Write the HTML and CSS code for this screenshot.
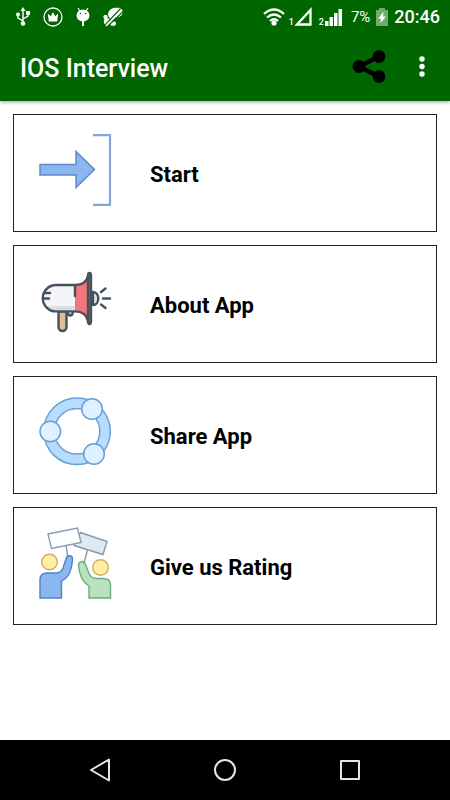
FILE: index.html
```html
<!DOCTYPE html>
<html lang="en">
<head>
<meta charset="utf-8">
<meta name="viewport" content="width=device-width, initial-scale=1">
<title>IOS Interview</title>
<link rel="stylesheet" href="styles.css">
</head>
<body>
<header class="top">
  <div class="status">
    <div class="status-group notices">
      <svg width="20" height="20" viewBox="0 0 20 20" fill="none" stroke="#fff" stroke-width="1.4"><path d="M10 3v14M10 14L5 11V8M10 12l5-3V6"/><path d="M10 0l2.500 4h-5zM13 4h4v4h-4z" fill="#fff" stroke="none"/><circle cx="5" cy="7.500" r="2" fill="#fff" stroke="none"/><circle cx="10" cy="16.500" r="2.300" fill="#fff" stroke="none"/></svg>
      <svg width="20" height="20" viewBox="0 0 20 20"><circle cx="10" cy="10" r="9" fill="none" stroke="#fff" stroke-width="1.300"/><path d="M4.800 6.500l3 2.800L10 5l2.200 4.300 3-2.800-1 8H5.800z" fill="#fff"/></svg>
      <svg width="20" height="20" viewBox="0 0 20 20"><path d="M5 1l2 3M15 1l-2 3" stroke="#fff" stroke-width="1.200"/><ellipse cx="10" cy="8.500" rx="6.500" ry="6" fill="#fff"/><path d="M9 14h2v5H9z" fill="#fff"/><circle cx="7.500" cy="6.500" r=".8" fill="#060"/><circle cx="12.500" cy="6.500" r=".8" fill="#060"/></svg>
      <svg width="20" height="20" viewBox="0 0 20 20"><path d="M5 8C5 2 11 0 14 1c3-1 6.500 2 5.500 5-1 4-5 5-8 4.500L8 14z" fill="#fff"/><circle cx="2.500" cy="10" r="2.200" fill="#fff"/><circle cx="4" cy="14.500" r="3.200" fill="#fff"/><ellipse cx="10" cy="16.500" rx="3" ry="2.300" fill="#fff"/><path d="M2.500 17.500L17.500 1.500M4.500 19.500L20 4.500" stroke="#060" stroke-width="1.100"/><path d="M3 19L19 3" stroke="#fff" stroke-width="1.400"/></svg>
    </div>
    <div class="status-group">
      <svg width="22" height="18" viewBox="0 0 22 18" fill="none" stroke="#fff" stroke-width="2.300"><path d="M1 6Q11-3 21 6M4 9.500q7-6 14 0M7 13q4-3.500 8 0"/><circle cx="11" cy="15" r="2.600" fill="#fff" stroke="none"/></svg>
      <span class="sim">1</span>
      <svg width="18" height="18" viewBox="0 0 18 18"><path d="M2 16.500L15.500 2v14.500z" fill="none" stroke="#fff" stroke-width="2.300"/></svg>
      <span class="sim sim-second">2</span>
      <svg width="18" height="18" viewBox="0 0 18 18" fill="#fff"><path d="M0 13h3.500v5H0zM4.500 9H8v9H4.500zM9 5h3.500v13H9zM13.500 1H17v17h-3.500z"/></svg>
      <span class="percent">7%</span>
      <svg class="battery" width="12" height="18" viewBox="0 0 12 18"><path d="M3 0h6v2h3v16H0V2h3z" fill="#72aa72"/><path d="M7.500 4L2 10.500h3L4.500 15 10 8.500H7z" fill="#fff"/></svg>
      <time class="clock">20:46</time>
    </div>
  </div>
  <div class="toolbar">
    <h1>IOS Interview</h1>
    <button class="tool" aria-label="Share"><svg width="34" height="34" viewBox="0 0 34 34"><path d="M27 6.500L7 16.500l20 10" fill="none" stroke="#000" stroke-width="4.500"/><circle cx="27" cy="6.500" r="6.400"/><circle cx="7" cy="16.500" r="6.400"/><circle cx="27" cy="26.500" r="6.400"/></svg></button>
    <button class="tool" aria-label="More options"><svg width="6" height="22" viewBox="0 0 6 22" fill="#fff"><circle cx="3" cy="3" r="2.700"/><circle cx="3" cy="10.500" r="2.700"/><circle cx="3" cy="18" r="2.700"/></svg></button>
  </div>
</header>
<main class="menu">
  <button class="card">
    <svg class="picture" viewBox="0 0 72 72"><path d="M1 30.500h36V17.500L55.500 35.500 37 53.500V41H1z" fill="#8bb7f0" stroke="#5d8ac8" stroke-width="1.500"/><path d="M54 1.200h17v69.600H54" fill="none" stroke="#82a6d5" stroke-width="2.200"/></svg>
    <span>Start</span>
  </button>
  <button class="card">
    <svg class="picture" viewBox="0 0 72 72" stroke="#47515c" stroke-width="2.400" stroke-linecap="round" stroke-linejoin="round"><path d="M28 46c1 6 6 6 6 0" fill="#cfd3d8"/><path d="M19.500 46.500h8V62a4 4 0 0 1-8 0z" fill="#dcbf94"/><path d="M54 27c7 0 7 13 0 13z" fill="#e3e5ea"/><path d="M36 20H17a13.200 13.200 0 0 0 0 26.400h19z" fill="#f4f4fa" stroke="none"/><path d="M7 41h29v4H15q-5 0-8-4z" fill="#dcdce2" stroke="none"/><path d="M36 20q11 0 13-9v45q-2-9.500-13-9.500z" fill="#f2777c" stroke="none"/><path d="M49 11q-2 9-13 9H17a13.200 13.200 0 0 0 0 26.400h19q11 0 13 9.600M36 21v10" fill="none"/><path d="M49 11q0-3 1.500-3T52 11v45q0 3-1.500 3T49 56z" fill="#656b75"/><path d="M5 28h6M5 33.500h5M62 27l4.500-3.500M64 33.500h7M62 39.500l4.500 3.500" fill="none"/></svg>
    <span>About App</span>
  </button>
  <button class="card">
    <svg class="picture" viewBox="0 0 72 72" stroke="#66a1d9" stroke-width="1.500"><path d="M38 2a33.300 33.300 0 1 0 0 66.600A33.300 33.300 0 1 0 38 2zM38 12.500a22.800 22.800 0 1 1 0 45.600 22.800 22.800 0 1 1 0-45.600z" fill="#b6dcfe" fill-rule="evenodd"/><g fill="#dff0fe"><circle cx="11.300" cy="35.500" r="10.300"/><circle cx="53" cy="13" r="10.300"/><circle cx="55" cy="58" r="10.300"/></g></svg>
    <span>Share App</span>
  </button>
  <button class="card">
    <svg class="picture" viewBox="0 0 72 72" stroke-width="1.400"><g stroke="#8799ab"><path d="M27 18l2 14M48.500 23L45 36"/><path d="M41.500 5.500L68 14.500 64 27.500 35 18.500z" fill="#dfe9f2"/><path d="M9 7l29.500-6L42 15.500l-29.500 6z" fill="#fff"/></g><g fill="#ffeea3" stroke="#cdb063"><circle cx="10.500" cy="35" r="7.800"/><circle cx="61.500" cy="40.500" r="7.800"/></g><path d="M1 71V53q0-7 7-7h9q5 0 7-5l3-9c1-5 7-4 6.500 1-1 10-3 17-11 21v17z" fill="#8bb7f0" stroke="#5183c2"/><path d="M71.500 71V58q0-6.500-7-6.500H58q-6 0-8-5-2-5-3.500-9c-2-5-7-3-7 1 1 10 4 17 10.500 20.500V71z" fill="#bae0bd" stroke="#6bad83"/></svg>
    <span>Give us Rating</span>
  </button>
</main>
<nav class="system">
  <button aria-label="Back"><svg width="24" height="24" viewBox="0 0 24 24"><path d="M3 12L21 1.500v21z"/></svg></button>
  <button aria-label="Home"><svg width="24" height="24" viewBox="0 0 24 24"><circle cx="12" cy="12" r="10"/></svg></button>
  <button aria-label="Recent apps"><svg width="24" height="24" viewBox="0 0 24 24"><path d="M3 3h18v18H3z"/></svg></button>
</nav>
</body>
</html>
```
FILE: styles.css
```css
* {
  box-sizing: border-box;
}

body {
  margin: 0;
  min-height: 100vh;
  display: flex;
  flex-direction: column;
  background: #fff;
  color: #000;
  font-family: Roboto, "Liberation Sans", sans-serif;
}

button {
  margin: 0;
  padding: 0;
  border: 0;
  background: none;
  color: inherit;
  font: inherit;
  cursor: pointer;
}

svg {
  display: block;
  flex: none;
  overflow: visible;
}

.top {
  background: #060;
  color: #fff;
  box-shadow: 0 1px 4px rgba(0, 0, 0, 0.4);
}

.status {
  display: flex;
  justify-content: space-between;
  align-items: center;
  height: 33px;
  padding: 0 10px 0 13px;
}

.status-group {
  display: flex;
  align-items: center;
}

.notices {
  gap: 10px;
}

.sim {
  align-self: flex-end;
  margin-left: 4px;
  font-size: 9px;
  line-height: 10px;
  font-weight: 500;
}

.sim-second {
  margin-left: 6px;
}

.sim + svg {
  margin-left: 1px;
}

.percent {
  margin-left: 8px;
  font-size: 15px;
}

.battery {
  margin: 0 6px;
}

.clock {
  font-size: 18px;
  font-weight: 500;
}

.toolbar {
  display: flex;
  align-items: center;
  height: 68px;
  padding: 0 12px 0 20px;
}

h1 {
  flex: 1;
  margin: 0;
  padding-top: 3px;
  font-size: 25px;
  line-height: 32px;
  font-weight: 500;
}

.tool {
  display: flex;
  justify-content: center;
  min-width: 32px;
}

.tool + .tool {
  margin-left: 20px;
}

.menu {
  flex: 1;
  display: flex;
  flex-direction: column;
  gap: 13px;
  padding: 13px;
}

.card {
  display: flex;
  align-items: center;
  gap: 39px;
  padding: 19px 25px 25px;
  border: 1px solid #222;
  font-size: 22px;
  line-height: 28px;
  font-weight: 700;
  text-align: left;
}

.card span {
  padding-top: 9px;
}

.picture {
  width: 72px;
  height: 72px;
}

.system {
  display: flex;
  height: 60px;
  padding: 0 37px;
  background: #000;
}

.system button {
  flex: 1;
  display: flex;
  align-items: center;
  justify-content: center;
}

.system svg {
  fill: none;
  stroke: #e6e6e6;
  stroke-width: 2;
  stroke-linejoin: round;
}
```
